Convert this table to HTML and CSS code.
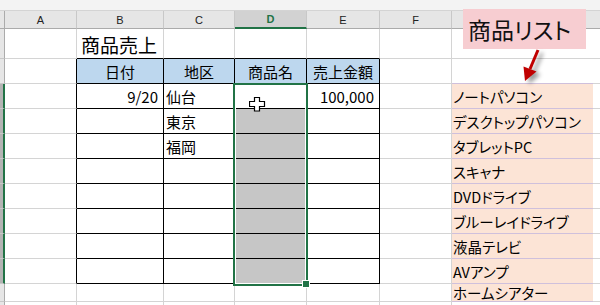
FILE: index.html
```html
<!DOCTYPE html>
<html lang="ja">
<head>
<meta charset="utf-8">
<title>商品売上</title>
<link rel="stylesheet" href="styles.css">
</head>
<body>
<div class="screen">
  <div class="topstrip"></div>
  <div class="sheet">
    <!-- column headers -->
    <div class="corner"></div>
    <div class="ch">A</div><div class="ch">B</div><div class="ch">C</div><div class="ch sel">D</div><div class="ch">E</div><div class="ch">F</div><div class="ch nor"></div><div class="ch last"></div>
    <!-- row 1 -->
    <div class="rh"></div>
    <div class="c"></div><div class="c tt title">商品売上</div><div class="c tt"></div><div class="c tt"></div><div class="c tt"></div><div class="c"></div><div class="c nor"></div><div class="c last"></div>
    <!-- row 2 -->
    <div class="rh"></div>
    <div class="c tl"></div><div class="tb th">日付</div><div class="tb th">地区</div><div class="tb th">商品名</div><div class="tb th">売上金額</div><div class="c"></div><div class="c nor lav"></div><div class="c last"></div>
    <!-- row 3 -->
    <div class="rh sel"></div>
    <div class="c tl"></div><div class="tb num">9/20</div><div class="tb txt">仙台</div><div class="tb"></div><div class="tb num">100,000</div><div class="c"></div><div class="p">ノートパソコン</div><div class="c last"></div>
    <!-- row 4 -->
    <div class="rh sel"></div>
    <div class="c tl"></div><div class="tb"></div><div class="tb txt">東京</div><div class="tb g"></div><div class="tb"></div><div class="c"></div><div class="p">デスクトップパソコン</div><div class="c last"></div>
    <!-- row 5 -->
    <div class="rh sel"></div>
    <div class="c tl"></div><div class="tb"></div><div class="tb txt">福岡</div><div class="tb g"></div><div class="tb"></div><div class="c"></div><div class="p">タブレットPC</div><div class="c last"></div>
    <!-- row 6 -->
    <div class="rh sel"></div>
    <div class="c tl"></div><div class="tb"></div><div class="tb"></div><div class="tb g"></div><div class="tb"></div><div class="c"></div><div class="p">スキャナ</div><div class="c last"></div>
    <!-- row 7 -->
    <div class="rh sel"></div>
    <div class="c tl"></div><div class="tb"></div><div class="tb"></div><div class="tb g"></div><div class="tb"></div><div class="c"></div><div class="p">DVDドライブ</div><div class="c last"></div>
    <!-- row 8 -->
    <div class="rh sel"></div>
    <div class="c tl"></div><div class="tb"></div><div class="tb"></div><div class="tb g"></div><div class="tb"></div><div class="c"></div><div class="p">ブルーレイドライブ</div><div class="c last"></div>
    <!-- row 9 -->
    <div class="rh sel"></div>
    <div class="c tl"></div><div class="tb"></div><div class="tb"></div><div class="tb g"></div><div class="tb"></div><div class="c"></div><div class="p">液晶テレビ</div><div class="c last"></div>
    <!-- row 10 -->
    <div class="rh sel"></div>
    <div class="c tl"></div><div class="tb"></div><div class="tb"></div><div class="tb g"></div><div class="tb"></div><div class="c"></div><div class="p">AVアンプ</div><div class="c last"></div>
    <!-- row 11 -->
    <div class="rh"></div>
    <div class="c"></div><div class="c"></div><div class="c"></div><div class="c"></div><div class="c"></div><div class="c"></div><div class="p">ホームシアター</div><div class="c last"></div>
    <!-- row 12 -->
    <div class="rh"></div>
    <div class="c"></div><div class="c"></div><div class="c"></div><div class="c"></div><div class="c"></div><div class="c"></div><div class="c nor"></div><div class="c last"></div>
  </div>

  <div class="selection"></div>
  <div class="handle"></div>

  <svg class="cursor" width="17" height="15" viewBox="0 0 17 15">
    <path d="M5.5 0.5h5v4h5v5h-5v4.5h-5v-4.5h-5v-5h5z" fill="#fff" stroke="#000" stroke-width="1.2"/>
  </svg>

  <div class="callout">商品リスト</div>
  <svg class="arrow" width="40" height="45" viewBox="0 0 40 45">
    <line x1="28" y1="5" x2="20" y2="24" stroke="#c00000" stroke-width="3"/>
    <polygon points="15,36 26.5,26.5 13.5,21.5" fill="#c00000"/>
  </svg>
</div>
</body>
</html>
```

FILE: styles.css
```css
* { box-sizing: border-box; }

html, body {
  margin: 0;
  padding: 0;
  background: #fff;
}

.screen {
  position: relative;
  width: 600px;
  height: 305px;
  overflow: hidden;
  font-family: "Noto Sans CJK JP", "Noto Sans", sans-serif;
  color: #000;
}

.topstrip {
  height: 11px;
  background: #f3f3f3;
  border-bottom: 1px solid #d4d4d4;
}

.sheet {
  display: grid;
  grid-template-columns: 5px 72px 87px 71px 72px 73px 72px 141px 1fr;
  grid-template-rows: 18px 30px 25px repeat(8, 25px) 18px 25px;
}

.corner {
  background: #e6e6e6;
  border-right: 1px solid #ababab;
  border-bottom: 1px solid #ababab;
}

.ch {
  background: #e6e6e6;
  border-right: 1px solid #c8c8c8;
  border-bottom: 1px solid #ababab;
  display: flex;
  align-items: center;
  justify-content: center;
  font-family: "Liberation Sans", Arial, sans-serif;
  font-size: 11px;
  color: #222;
}

.ch.sel {
  background: #d2d2d2;
  color: #217346;
  font-weight: bold;
  border-bottom: 2px solid #217346;
}

.ch.nor, .ch.last { border-right: none; }

.rh {
  background: #e6e6e6;
  border-right: 1px solid #ababab;
  border-bottom: 1px solid #c8c8c8;
}

.rh.sel {
  background: #b4b4b4;
  border-right: 2px solid #217346;
}

.c, .tb, .p {
  border-right: 1px solid #d4d4d4;
  border-bottom: 1px solid #d4d4d4;
  display: flex;
  align-items: center;
  font-size: 15px;
  white-space: nowrap;
}

.c.nor, .c.last { border-right: none; }

.c.tl { border-right-color: #000; }
.c.tt { border-bottom-color: #000; }

.title {
  font-size: 19px;
  padding-left: 4px;
  padding-top: 1px;
}

.tb {
  border-right-color: #000;
  border-bottom-color: #000;
}

.th {
  background: #bdd7ee;
  justify-content: center;
}

.num {
  justify-content: flex-end;
  padding-right: 5px;
}

.txt { padding-left: 2px; }

.g { background: #c6c6c6; }

.lav { border-bottom-color: #cfc0dc; }

.p {
  background: #fce4d6;
  border-right: none;
  border-bottom-color: #cfc0dc;
  padding-left: 1px;
  font-feature-settings: "palt";
  font-size: 14.5px;
}

.selection {
  position: absolute;
  left: 233px;
  top: 83px;
  width: 75px;
  height: 203px;
  border: 2px solid #217346;
  box-shadow: inset 0 0 0 1px #fff;
}

.handle {
  position: absolute;
  left: 302px;
  top: 280px;
  width: 8px;
  height: 8px;
  background: #217346;
  border: 1px solid #fff;
}

.cursor {
  position: absolute;
  left: 249px;
  top: 97px;
}

.callout {
  position: absolute;
  left: 463px;
  top: 9px;
  width: 123px;
  height: 40px;
  background: #f7cdd1;
  display: flex;
  align-items: center;
  padding-left: 5px;
  font-size: 23px;
  font-feature-settings: "palt";
  color: #111;
}

.arrow {
  position: absolute;
  left: 510px;
  top: 45px;
  filter: drop-shadow(4px 3px 2px rgba(0, 0, 0, 0.4));
}
```
